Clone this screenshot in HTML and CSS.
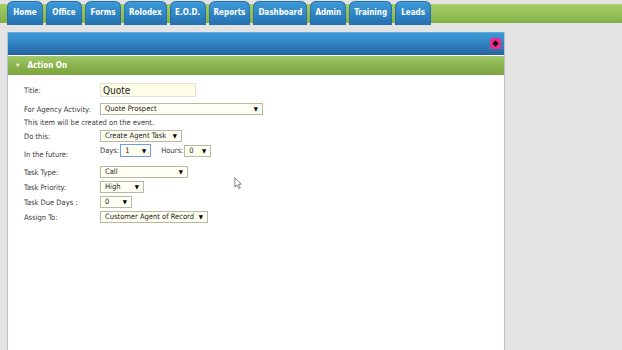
FILE: index.html
```html
<!DOCTYPE html>
<html>
<head>
  <title>Action On</title>
  <link rel="stylesheet" href="styles.css">
</head>
<body>
  <!-- Top navigation tabs -->
  <div class="nav">
    <a class="tab">Home</a>
    <a class="tab">Office</a>
    <a class="tab">Forms</a>
    <a class="tab">Rolodex</a>
    <a class="tab">E.O.D.</a>
    <a class="tab">Reports</a>
    <a class="tab">Dashboard</a>
    <a class="tab">Admin</a>
    <a class="tab">Training</a>
    <a class="tab">Leads</a>
  </div>

  <div class="panel">
    <div class="panel-head">
      <button class="close-btn" title="Close">
        <svg viewBox="0 0 10 10"><path d="M5 1.5L8.5 5 5 8.5 1.5 5z M3 4h4v2H3z"/></svg>
      </button>
    </div>
    <div class="section-head"><span class="caret">&#9660;</span>Action On</div>

    <div class="form">
      <div class="row row-title">
        <label>Title:</label>
        <div class="text-input">Quote</div>
      </div>
      <div class="row row-agency">
        <label>For Agency Activity:</label>
        <div class="sel w-agency">Quote Prospect<span class="arr">&#9660;</span></div>
      </div>
      <div class="note">This item will be created on the event.</div>
      <div class="row row-do">
        <label>Do this:</label>
        <div class="sel w-do">Create Agent Task<span class="arr">&#9660;</span></div>
      </div>
      <div class="row row-future">
        <label class="low">In the future:</label>
        <div class="future">
          <span class="small-lbl">Days:</span>
          <div class="sel w-days focus">1<span class="arr">&#9660;</span></div>
          <span class="small-lbl hours">Hours:</span>
          <div class="sel w-hours">0<span class="arr">&#9660;</span></div>
        </div>
      </div>
      <div class="row row-type">
        <label>Task Type:</label>
        <div class="sel w-type">Call<span class="arr">&#9660;</span></div>
      </div>
      <div class="row">
        <label>Task Priority:</label>
        <div class="sel w-prio">High<span class="arr">&#9660;</span></div>
      </div>
      <div class="row">
        <label>Task Due Days :</label>
        <div class="sel w-due">0<span class="arr">&#9660;</span></div>
      </div>
      <div class="row">
        <label>Assign To:</label>
        <div class="sel w-assign">Customer Agent of Record<span class="arr">&#9660;</span></div>
      </div>
    </div>

    <!-- mouse pointer captured in the screenshot -->
    <svg class="cursor" viewBox="0 0 12 18">
      <path d="M1 1v13l3-3 2.5 5 2-1-2.5-5h4z" fill="#fff" stroke="#555" stroke-width="1"/>
    </svg>
  </div>
</body>
</html>
```

FILE: styles.css
```css
/* Page */
body {
  margin: 0;
  background: #e3e3e3;
  font-family: 'DejaVu Sans Condensed', 'DejaVu Sans', sans-serif;
  color: #333;
  overflow: hidden;
}
/* Navigation */
.nav {
  display: flex;
  gap: 3px;
  height: 25px;
  padding: 1px 0 0 7px;
  box-sizing: border-box;
  background: linear-gradient(to bottom, #e3e3e3 0, #e3e3e3 4px, #a6cf68 4px, #82b045 23px, #e3e3e3 23px);
}
.tab {
  height: 24px;
  line-height: 21px;
  padding: 0 4px;
  min-width: 36px;
  text-align: center;
  font-size: 8px;
  font-weight: bold;
  color: #fff;
  background: linear-gradient(to bottom, #3d9bd9, #2370b0);
  border-radius: 6px 6px 0 0;
  border: 1px solid #2a6ea3;
  border-bottom: none;
  box-sizing: border-box;
}
/* Panel */
.panel {
  position: relative;
  margin: 7px 0 0 7px;
  width: 498px;
  height: 330px;
  background: #fff;
  border: 1px solid #b9c3cd;
  border-top: none;
  box-sizing: border-box;
}
.panel-head {
  height: 23px;
  background: linear-gradient(to bottom, #3e9ad8, #2c76b5 70%, #26649a);
  border-top: 1px solid #5aa8de;
  display: flex;
  justify-content: flex-end;
  align-items: flex-start;
  padding: 5px 3px 0 0;
  box-sizing: border-box;
}
.close-btn {
  width: 11px;
  height: 11px;
  padding: 0;
  border: none;
  border-radius: 2px;
  background: #ee2a8c;
  display: flex;
  align-items: center;
  justify-content: center;
}
.close-btn svg {
  width: 9px;
  height: 9px;
  fill: #111;
}
.section-head {
  height: 19px;
  margin-top: 1px;
  line-height: 19px;
  background: linear-gradient(to bottom, #a2c96a, #86b04a 60%, #7ea53f);
  color: #fff;
  font-size: 8px;
  font-weight: bold;
  padding-left: 8px;
}
.caret {
  font-size: 5px;
  color: #f3f0c8;
  margin-right: 8px;
  vertical-align: 1px;
}
/* Form */
.form {
  padding: 7px 0 0 16px;
  font-size: 7.5px;
  color: #3a3a3a;
}
.row {
  display: flex;
  align-items: center;
  height: 12px;
  margin-bottom: 3px;
}
.row label {
  width: 76px;
  flex: none;
  white-space: nowrap;
}
.row-title {
  height: 15px;
  margin-bottom: 6px;
}
.row-title label {
  padding-top: 2px;
}
.note {
  height: 10px;
  line-height: 10px;
  margin-bottom: 2px;
}
.row-do {
  margin-bottom: 2px;
}
.row-future {
  align-items: flex-start;
  height: 13px;
  margin-bottom: 9px;
}
.row-future .low {
  padding-top: 6px;
}
.future {
  display: flex;
  align-items: center;
}
.small-lbl {
  margin-right: 1px;
}
.hours {
  margin-left: 10px;
}
.text-input {
  width: 96px;
  height: 14px;
  line-height: 14px;
  font-size: 10px;
  padding-left: 2px;
  background: #fffde7;
  border: 1px solid #e2e2d0;
  box-sizing: border-box;
  color: #222;
}
.sel {
  position: relative;
  height: 12px;
  line-height: 10px;
  padding-left: 4px;
  background: #fffef2;
  border: 1px solid #b8b8a4;
  box-sizing: border-box;
  color: #222;
  white-space: nowrap;
}
.sel.focus {
  border-color: #6f9fd8;
  height: 13px;
  line-height: 11px;
}
.arr {
  position: absolute;
  right: 4px;
  top: 0;
  font-size: 6px;
  color: #000;
}
.w-agency { width: 163px; }
.w-do { width: 82px; }
.w-days { width: 31px; }
.w-hours { width: 27px; }
.w-type { width: 88px; }
.w-prio { width: 44px; }
.w-due { width: 32px; }
.w-assign { width: 108px; }
.cursor {
  position: absolute;
  left: 226px;
  top: 145px;
  width: 9px;
  height: 13px;
}
```
